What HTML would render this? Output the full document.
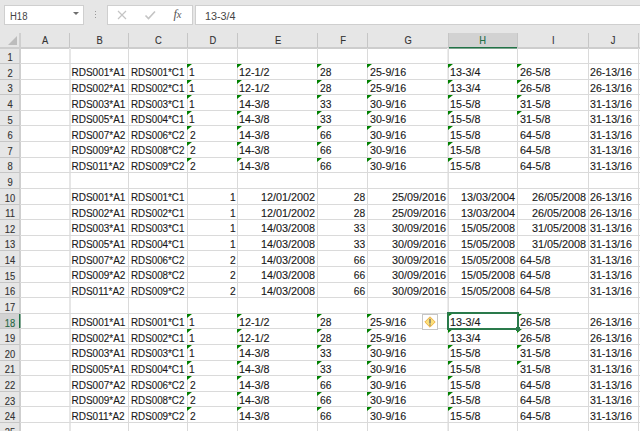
<!DOCTYPE html><html><head><meta charset="utf-8"><style>
*{margin:0;padding:0;box-sizing:border-box}
html,body{width:640px;height:431px;overflow:hidden;background:#e6e6e6;font-family:"Liberation Sans",sans-serif;}
.a{position:absolute}
.t{position:absolute;font-size:10.0px;line-height:14px;color:#1a1a1a;-webkit-text-stroke:0.12px #1a1a1a;white-space:nowrap}
.gv{position:absolute;width:1px;background:#dadada}
.gh{position:absolute;height:1px;background:#dadada}
.tri{position:absolute;width:0;height:0;border-top:4px solid #008000;border-right:5px solid transparent}
.hd{position:absolute;font-size:10.4px;line-height:14px;color:#333;-webkit-text-stroke:0.12px #333;text-align:center;white-space:nowrap;transform:scaleX(0.9)}

</style></head><body>
<div class="a" style="left:4px;top:5px;width:80px;height:20px;background:#fff;border:1px solid #cfcfcf"></div>
<div class="t" style="left:9.5px;top:9.6px;color:#444;-webkit-text-stroke:0;transform:scaleX(0.95);transform-origin:0 0">H18</div>
<div class="a" style="left:73px;top:12.3px;width:0;height:0;border-left:3px solid transparent;border-right:3px solid transparent;border-top:3px solid #6e6e6e"></div>
<div class="a" style="left:95px;top:11px;width:1px;height:1px;background:#999"></div>
<div class="a" style="left:95px;top:14px;width:1px;height:1px;background:#999"></div>
<div class="a" style="left:95px;top:17px;width:1px;height:1px;background:#999"></div>
<div class="a" style="left:107px;top:5px;width:86px;height:20px;background:#fff;border:1px solid #cfcfcf"></div>
<svg class="a" style="left:116px;top:9px" width="12" height="12" viewBox="0 0 12 12"><path d="M2 2L10 10M10 2L2 10" stroke="#c4c4c4" stroke-width="1.2" fill="none"/></svg>
<svg class="a" style="left:144px;top:8.5px" width="12" height="12" viewBox="0 0 12 12"><path d="M1.5 6.5L4.5 9.5L11 2.5" stroke="#c4c4c4" stroke-width="1.6" fill="none"/></svg>
<div class="a" style="left:173.5px;top:7px;font-family:'Liberation Serif',serif;font-style:italic;font-size:12.5px;line-height:14px;color:#555">f<span style="font-size:10.5px;margin-left:-0.3px">x</span></div>
<div class="a" style="left:195px;top:5px;width:460px;height:20px;background:#fff;border:1px solid #cfcfcf"></div>
<div class="t" style="left:205px;top:9.5px;color:#444;-webkit-text-stroke:0;transform:scaleX(1.08);transform-origin:0 0">13-3/4</div>
<div class="a" style="left:0;top:48px;width:640px;height:383px;background:#fff"></div>
<div class="a" style="left:0;top:33px;width:640px;height:15px;background:#e6e6e6"></div>
<div class="a" style="left:0;top:48px;width:20px;height:383px;background:#e6e6e6"></div>
<div class="a" style="left:448.5px;top:33px;width:69.0px;height:15px;background:#d2d2d2"></div>
<div class="a" style="left:0;top:313.8px;width:20px;height:15.1px;background:#d2d2d2"></div>
<div class="a" style="left:0;top:47px;width:640px;height:2px;background:#cdcdcd"></div>
<div class="a" style="left:448.0px;top:47px;width:69.5px;height:1px;background:#217346"></div>
<div class="a" style="left:448.0px;top:48px;width:69.5px;height:1px;background:rgba(33,115,70,0.45)"></div>
<div class="a" style="left:19px;top:33px;width:2px;height:398px;background:#cfcfcf"></div>
<div class="a" style="left:19px;top:313.3px;width:1px;height:15.6px;background:#217346"></div>
<div class="a" style="left:20px;top:313.3px;width:1px;height:15.6px;background:rgba(33,115,70,0.45)"></div>
<div class="a" style="left:8px;top:36px;width:0;height:0;border-bottom:9px solid #bcbcbc;border-left:9px solid transparent"></div>
<div class="a" style="left:69.0px;top:33px;width:1px;height:15px;background:#c6c6c6"></div>
<div class="hd" style="left:19.5px;top:34px;width:50.0px;color:#333">A</div>
<div class="a" style="left:128.0px;top:33px;width:1px;height:15px;background:#c6c6c6"></div>
<div class="hd" style="left:69.5px;top:34px;width:59.0px;color:#333">B</div>
<div class="a" style="left:187.0px;top:33px;width:1px;height:15px;background:#c6c6c6"></div>
<div class="hd" style="left:128.5px;top:34px;width:59.0px;color:#333">C</div>
<div class="a" style="left:237.0px;top:33px;width:1px;height:15px;background:#c6c6c6"></div>
<div class="hd" style="left:187.5px;top:34px;width:50.0px;color:#333">D</div>
<div class="a" style="left:317.0px;top:33px;width:1px;height:15px;background:#c6c6c6"></div>
<div class="hd" style="left:237.5px;top:34px;width:80.0px;color:#333">E</div>
<div class="a" style="left:367.0px;top:33px;width:1px;height:15px;background:#c6c6c6"></div>
<div class="hd" style="left:317.5px;top:34px;width:50.0px;color:#333">F</div>
<div class="a" style="left:447.5px;top:33px;width:1px;height:15px;background:#c6c6c6"></div>
<div class="hd" style="left:367.5px;top:34px;width:80.5px;color:#333">G</div>
<div class="a" style="left:517.0px;top:33px;width:1px;height:15px;background:#c6c6c6"></div>
<div class="hd" style="left:448.0px;top:34px;width:69.5px;color:#217346">H</div>
<div class="a" style="left:587.5px;top:33px;width:1px;height:15px;background:#c6c6c6"></div>
<div class="hd" style="left:517.5px;top:34px;width:70.5px;color:#333">I</div>
<div class="a" style="left:637.5px;top:33px;width:1px;height:15px;background:#c6c6c6"></div>
<div class="hd" style="left:588.0px;top:34px;width:50.0px;color:#333">J</div>
<div class="gv" style="left:69px;top:48px;width:2px;height:383px;background:#e6e6e6"></div>
<div class="gv" style="left:128.0px;top:48px;height:383px"></div>
<div class="gv" style="left:187.0px;top:48px;height:383px"></div>
<div class="gv" style="left:237.0px;top:48px;height:383px"></div>
<div class="gv" style="left:317.0px;top:48px;height:383px"></div>
<div class="gv" style="left:367.0px;top:48px;height:383px"></div>
<div class="gv" style="left:447px;top:48px;width:1px;height:383px;background:#ececec"></div>
<div class="gv" style="left:448px;top:48px;width:1px;height:383px;background:#dedede"></div>
<div class="gv" style="left:517.0px;top:48px;height:383px"></div>
<div class="gv" style="left:587.5px;top:48px;height:383px"></div>
<div class="gv" style="left:637.5px;top:48px;height:383px"></div>
<div class="gh" style="left:20px;top:63.0px;width:620px"></div>
<div class="a" style="left:0;top:63.0px;width:20px;height:1px;background:#c6c6c6"></div>
<div class="hd" style="left:0;top:51.1px;width:20px;color:#333">1</div>
<div class="gh" style="left:20px;top:78.6px;width:620px"></div>
<div class="a" style="left:0;top:78.6px;width:20px;height:1px;background:#c6c6c6"></div>
<div class="hd" style="left:0;top:66.7px;width:20px;color:#333">2</div>
<div class="gh" style="left:20px;top:94.2px;width:620px"></div>
<div class="a" style="left:0;top:94.2px;width:20px;height:1px;background:#c6c6c6"></div>
<div class="hd" style="left:0;top:82.3px;width:20px;color:#333">3</div>
<div class="gh" style="left:20px;top:109.8px;width:620px"></div>
<div class="a" style="left:0;top:109.8px;width:20px;height:1px;background:#c6c6c6"></div>
<div class="hd" style="left:0;top:97.9px;width:20px;color:#333">4</div>
<div class="gh" style="left:20px;top:125.4px;width:620px"></div>
<div class="a" style="left:0;top:125.4px;width:20px;height:1px;background:#c6c6c6"></div>
<div class="hd" style="left:0;top:113.5px;width:20px;color:#333">5</div>
<div class="gh" style="left:20px;top:141.1px;width:620px"></div>
<div class="a" style="left:0;top:141.1px;width:20px;height:1px;background:#c6c6c6"></div>
<div class="hd" style="left:0;top:129.2px;width:20px;color:#333">6</div>
<div class="gh" style="left:20px;top:156.7px;width:620px"></div>
<div class="a" style="left:0;top:156.7px;width:20px;height:1px;background:#c6c6c6"></div>
<div class="hd" style="left:0;top:144.8px;width:20px;color:#333">7</div>
<div class="gh" style="left:20px;top:172.3px;width:620px"></div>
<div class="a" style="left:0;top:172.3px;width:20px;height:1px;background:#c6c6c6"></div>
<div class="hd" style="left:0;top:160.4px;width:20px;color:#333">8</div>
<div class="gh" style="left:20px;top:187.9px;width:620px"></div>
<div class="a" style="left:0;top:187.9px;width:20px;height:1px;background:#c6c6c6"></div>
<div class="hd" style="left:0;top:176.0px;width:20px;color:#333">9</div>
<div class="gh" style="left:20px;top:203.5px;width:620px"></div>
<div class="a" style="left:0;top:203.5px;width:20px;height:1px;background:#c6c6c6"></div>
<div class="hd" style="left:0;top:191.6px;width:20px;color:#333">10</div>
<div class="gh" style="left:20px;top:219.1px;width:620px"></div>
<div class="a" style="left:0;top:219.1px;width:20px;height:1px;background:#c6c6c6"></div>
<div class="hd" style="left:0;top:207.2px;width:20px;color:#333">11</div>
<div class="gh" style="left:20px;top:234.7px;width:620px"></div>
<div class="a" style="left:0;top:234.7px;width:20px;height:1px;background:#c6c6c6"></div>
<div class="hd" style="left:0;top:222.8px;width:20px;color:#333">12</div>
<div class="gh" style="left:20px;top:250.3px;width:620px"></div>
<div class="a" style="left:0;top:250.3px;width:20px;height:1px;background:#c6c6c6"></div>
<div class="hd" style="left:0;top:238.4px;width:20px;color:#333">13</div>
<div class="gh" style="left:20px;top:265.9px;width:620px"></div>
<div class="a" style="left:0;top:265.9px;width:20px;height:1px;background:#c6c6c6"></div>
<div class="hd" style="left:0;top:254.0px;width:20px;color:#333">14</div>
<div class="gh" style="left:20px;top:281.5px;width:620px"></div>
<div class="a" style="left:0;top:281.5px;width:20px;height:1px;background:#c6c6c6"></div>
<div class="hd" style="left:0;top:269.6px;width:20px;color:#333">15</div>
<div class="gh" style="left:20px;top:297.1px;width:620px"></div>
<div class="a" style="left:0;top:297.1px;width:20px;height:1px;background:#c6c6c6"></div>
<div class="hd" style="left:0;top:285.2px;width:20px;color:#333">16</div>
<div class="gh" style="left:20px;top:312.8px;width:620px"></div>
<div class="a" style="left:0;top:312.8px;width:20px;height:1px;background:#c6c6c6"></div>
<div class="hd" style="left:0;top:300.9px;width:20px;color:#333">17</div>
<div class="gh" style="left:20px;top:328.4px;width:620px"></div>
<div class="a" style="left:0;top:328.4px;width:20px;height:1px;background:#c6c6c6"></div>
<div class="hd" style="left:0;top:316.5px;width:20px;color:#217346">18</div>
<div class="gh" style="left:20px;top:344.0px;width:620px"></div>
<div class="a" style="left:0;top:344.0px;width:20px;height:1px;background:#c6c6c6"></div>
<div class="hd" style="left:0;top:332.1px;width:20px;color:#333">19</div>
<div class="gh" style="left:20px;top:359.6px;width:620px"></div>
<div class="a" style="left:0;top:359.6px;width:20px;height:1px;background:#c6c6c6"></div>
<div class="hd" style="left:0;top:347.7px;width:20px;color:#333">20</div>
<div class="gh" style="left:20px;top:375.2px;width:620px"></div>
<div class="a" style="left:0;top:375.2px;width:20px;height:1px;background:#c6c6c6"></div>
<div class="hd" style="left:0;top:363.3px;width:20px;color:#333">21</div>
<div class="gh" style="left:20px;top:390.8px;width:620px"></div>
<div class="a" style="left:0;top:390.8px;width:20px;height:1px;background:#c6c6c6"></div>
<div class="hd" style="left:0;top:378.9px;width:20px;color:#333">22</div>
<div class="gh" style="left:20px;top:406.4px;width:620px"></div>
<div class="a" style="left:0;top:406.4px;width:20px;height:1px;background:#c6c6c6"></div>
<div class="hd" style="left:0;top:394.5px;width:20px;color:#333">23</div>
<div class="gh" style="left:20px;top:422.0px;width:620px"></div>
<div class="a" style="left:0;top:422.0px;width:20px;height:1px;background:#c6c6c6"></div>
<div class="hd" style="left:0;top:410.1px;width:20px;color:#333">24</div>
<div class="gh" style="left:20px;top:437.6px;width:620px"></div>
<div class="a" style="left:0;top:437.6px;width:20px;height:1px;background:#c6c6c6"></div>
<div class="hd" style="left:0;top:425.7px;width:20px;color:#333">25</div>
<div class="t" style="left:71.5px;top:66.3px;transform:scaleX(1.000);transform-origin:0 0">RDS001*A1</div>
<div class="t" style="left:130.5px;top:66.3px;transform:scaleX(0.980);transform-origin:0 0">RDS001*C1</div>
<div class="t" style="left:188.5px;top:66.3px;transform:scaleX(1.021);transform-origin:0 0">1</div>
<div class="tri" style="left:187.0px;top:64.0px"></div>
<div class="t" style="left:238.5px;top:66.3px;transform:scaleX(1.075);transform-origin:0 0">12-1/2</div>
<div class="tri" style="left:237.0px;top:64.0px"></div>
<div class="t" style="left:319.5px;top:66.3px;transform:scaleX(1.021);transform-origin:0 0">28</div>
<div class="tri" style="left:317.0px;top:64.0px"></div>
<div class="t" style="left:369.5px;top:66.3px;transform:scaleX(1.066);transform-origin:0 0">25-9/16</div>
<div class="tri" style="left:367.0px;top:64.0px"></div>
<div class="t" style="left:450.0px;top:66.3px;transform:scaleX(1.075);transform-origin:0 0">13-3/4</div>
<div class="tri" style="left:447.5px;top:64.0px"></div>
<div class="t" style="left:519.5px;top:66.3px;transform:scaleX(1.075);transform-origin:0 0">26-5/8</div>
<div class="tri" style="left:517.0px;top:64.0px"></div>
<div class="t" style="left:590.0px;top:66.3px;transform:scaleX(1.060);transform-origin:0 0">26-13/16</div>
<div class="t" style="left:71.5px;top:81.9px;transform:scaleX(1.000);transform-origin:0 0">RDS002*A1</div>
<div class="t" style="left:130.5px;top:81.9px;transform:scaleX(0.980);transform-origin:0 0">RDS002*C1</div>
<div class="t" style="left:188.5px;top:81.9px;transform:scaleX(1.021);transform-origin:0 0">1</div>
<div class="tri" style="left:187.0px;top:79.6px"></div>
<div class="t" style="left:238.5px;top:81.9px;transform:scaleX(1.075);transform-origin:0 0">12-1/2</div>
<div class="tri" style="left:237.0px;top:79.6px"></div>
<div class="t" style="left:319.5px;top:81.9px;transform:scaleX(1.021);transform-origin:0 0">28</div>
<div class="tri" style="left:317.0px;top:79.6px"></div>
<div class="t" style="left:369.5px;top:81.9px;transform:scaleX(1.066);transform-origin:0 0">25-9/16</div>
<div class="tri" style="left:367.0px;top:79.6px"></div>
<div class="t" style="left:450.0px;top:81.9px;transform:scaleX(1.075);transform-origin:0 0">13-3/4</div>
<div class="tri" style="left:447.5px;top:79.6px"></div>
<div class="t" style="left:519.5px;top:81.9px;transform:scaleX(1.075);transform-origin:0 0">26-5/8</div>
<div class="tri" style="left:517.0px;top:79.6px"></div>
<div class="t" style="left:590.0px;top:81.9px;transform:scaleX(1.060);transform-origin:0 0">26-13/16</div>
<div class="t" style="left:71.5px;top:97.5px;transform:scaleX(1.000);transform-origin:0 0">RDS003*A1</div>
<div class="t" style="left:130.5px;top:97.5px;transform:scaleX(0.980);transform-origin:0 0">RDS003*C1</div>
<div class="t" style="left:188.5px;top:97.5px;transform:scaleX(1.021);transform-origin:0 0">1</div>
<div class="tri" style="left:187.0px;top:95.2px"></div>
<div class="t" style="left:238.5px;top:97.5px;transform:scaleX(1.075);transform-origin:0 0">14-3/8</div>
<div class="tri" style="left:237.0px;top:95.2px"></div>
<div class="t" style="left:319.5px;top:97.5px;transform:scaleX(1.021);transform-origin:0 0">33</div>
<div class="tri" style="left:317.0px;top:95.2px"></div>
<div class="t" style="left:369.5px;top:97.5px;transform:scaleX(1.066);transform-origin:0 0">30-9/16</div>
<div class="tri" style="left:367.0px;top:95.2px"></div>
<div class="t" style="left:450.0px;top:97.5px;transform:scaleX(1.075);transform-origin:0 0">15-5/8</div>
<div class="tri" style="left:447.5px;top:95.2px"></div>
<div class="t" style="left:519.5px;top:97.5px;transform:scaleX(1.075);transform-origin:0 0">31-5/8</div>
<div class="tri" style="left:517.0px;top:95.2px"></div>
<div class="t" style="left:590.0px;top:97.5px;transform:scaleX(1.060);transform-origin:0 0">31-13/16</div>
<div class="t" style="left:71.5px;top:113.1px;transform:scaleX(1.000);transform-origin:0 0">RDS005*A1</div>
<div class="t" style="left:130.5px;top:113.1px;transform:scaleX(0.980);transform-origin:0 0">RDS004*C1</div>
<div class="t" style="left:188.5px;top:113.1px;transform:scaleX(1.021);transform-origin:0 0">1</div>
<div class="tri" style="left:187.0px;top:110.8px"></div>
<div class="t" style="left:238.5px;top:113.1px;transform:scaleX(1.075);transform-origin:0 0">14-3/8</div>
<div class="tri" style="left:237.0px;top:110.8px"></div>
<div class="t" style="left:319.5px;top:113.1px;transform:scaleX(1.021);transform-origin:0 0">33</div>
<div class="tri" style="left:317.0px;top:110.8px"></div>
<div class="t" style="left:369.5px;top:113.1px;transform:scaleX(1.066);transform-origin:0 0">30-9/16</div>
<div class="tri" style="left:367.0px;top:110.8px"></div>
<div class="t" style="left:450.0px;top:113.1px;transform:scaleX(1.075);transform-origin:0 0">15-5/8</div>
<div class="tri" style="left:447.5px;top:110.8px"></div>
<div class="t" style="left:519.5px;top:113.1px;transform:scaleX(1.075);transform-origin:0 0">31-5/8</div>
<div class="tri" style="left:517.0px;top:110.8px"></div>
<div class="t" style="left:590.0px;top:113.1px;transform:scaleX(1.060);transform-origin:0 0">31-13/16</div>
<div class="t" style="left:71.5px;top:128.8px;transform:scaleX(1.000);transform-origin:0 0">RDS007*A2</div>
<div class="t" style="left:130.5px;top:128.8px;transform:scaleX(0.980);transform-origin:0 0">RDS006*C2</div>
<div class="t" style="left:189.5px;top:128.8px;transform:scaleX(1.021);transform-origin:0 0">2</div>
<div class="tri" style="left:187.0px;top:126.4px"></div>
<div class="t" style="left:238.5px;top:128.8px;transform:scaleX(1.075);transform-origin:0 0">14-3/8</div>
<div class="tri" style="left:237.0px;top:126.4px"></div>
<div class="t" style="left:319.5px;top:128.8px;transform:scaleX(1.021);transform-origin:0 0">66</div>
<div class="tri" style="left:317.0px;top:126.4px"></div>
<div class="t" style="left:369.5px;top:128.8px;transform:scaleX(1.066);transform-origin:0 0">30-9/16</div>
<div class="tri" style="left:367.0px;top:126.4px"></div>
<div class="t" style="left:450.0px;top:128.8px;transform:scaleX(1.075);transform-origin:0 0">15-5/8</div>
<div class="tri" style="left:447.5px;top:126.4px"></div>
<div class="t" style="left:519.5px;top:128.8px;transform:scaleX(1.075);transform-origin:0 0">64-5/8</div>
<div class="t" style="left:590.0px;top:128.8px;transform:scaleX(1.060);transform-origin:0 0">31-13/16</div>
<div class="t" style="left:71.5px;top:144.4px;transform:scaleX(1.000);transform-origin:0 0">RDS009*A2</div>
<div class="t" style="left:130.5px;top:144.4px;transform:scaleX(0.980);transform-origin:0 0">RDS008*C2</div>
<div class="t" style="left:189.5px;top:144.4px;transform:scaleX(1.021);transform-origin:0 0">2</div>
<div class="tri" style="left:187.0px;top:142.1px"></div>
<div class="t" style="left:238.5px;top:144.4px;transform:scaleX(1.075);transform-origin:0 0">14-3/8</div>
<div class="tri" style="left:237.0px;top:142.1px"></div>
<div class="t" style="left:319.5px;top:144.4px;transform:scaleX(1.021);transform-origin:0 0">66</div>
<div class="tri" style="left:317.0px;top:142.1px"></div>
<div class="t" style="left:369.5px;top:144.4px;transform:scaleX(1.066);transform-origin:0 0">30-9/16</div>
<div class="tri" style="left:367.0px;top:142.1px"></div>
<div class="t" style="left:450.0px;top:144.4px;transform:scaleX(1.075);transform-origin:0 0">15-5/8</div>
<div class="tri" style="left:447.5px;top:142.1px"></div>
<div class="t" style="left:519.5px;top:144.4px;transform:scaleX(1.075);transform-origin:0 0">64-5/8</div>
<div class="t" style="left:590.0px;top:144.4px;transform:scaleX(1.060);transform-origin:0 0">31-13/16</div>
<div class="t" style="left:71.5px;top:160.0px;transform:scaleX(1.000);transform-origin:0 0">RDS011*A2</div>
<div class="t" style="left:130.5px;top:160.0px;transform:scaleX(0.980);transform-origin:0 0">RDS009*C2</div>
<div class="t" style="left:189.5px;top:160.0px;transform:scaleX(1.021);transform-origin:0 0">2</div>
<div class="tri" style="left:187.0px;top:157.7px"></div>
<div class="t" style="left:238.5px;top:160.0px;transform:scaleX(1.075);transform-origin:0 0">14-3/8</div>
<div class="tri" style="left:237.0px;top:157.7px"></div>
<div class="t" style="left:319.5px;top:160.0px;transform:scaleX(1.021);transform-origin:0 0">66</div>
<div class="tri" style="left:317.0px;top:157.7px"></div>
<div class="t" style="left:369.5px;top:160.0px;transform:scaleX(1.066);transform-origin:0 0">30-9/16</div>
<div class="tri" style="left:367.0px;top:157.7px"></div>
<div class="t" style="left:450.0px;top:160.0px;transform:scaleX(1.075);transform-origin:0 0">15-5/8</div>
<div class="tri" style="left:447.5px;top:157.7px"></div>
<div class="t" style="left:519.5px;top:160.0px;transform:scaleX(1.075);transform-origin:0 0">64-5/8</div>
<div class="t" style="left:590.0px;top:160.0px;transform:scaleX(1.060);transform-origin:0 0">31-13/16</div>
<div class="t" style="left:71.5px;top:191.2px;transform:scaleX(1.000);transform-origin:0 0">RDS001*A1</div>
<div class="t" style="left:130.5px;top:191.2px;transform:scaleX(0.980);transform-origin:0 0">RDS001*C1</div>
<div class="t" style="right:404.5px;top:191.2px;transform:scaleX(1.021);transform-origin:100% 0">1</div>
<div class="t" style="right:324.5px;top:191.2px;transform:scaleX(1.081);transform-origin:100% 0">12/01/2002</div>
<div class="t" style="right:274.5px;top:191.2px;transform:scaleX(1.021);transform-origin:100% 0">28</div>
<div class="t" style="right:194.0px;top:191.2px;transform:scaleX(1.081);transform-origin:100% 0">25/09/2016</div>
<div class="t" style="right:124.5px;top:191.2px;transform:scaleX(1.081);transform-origin:100% 0">13/03/2004</div>
<div class="t" style="right:54.0px;top:191.2px;transform:scaleX(1.081);transform-origin:100% 0">26/05/2008</div>
<div class="t" style="left:590.0px;top:191.2px;transform:scaleX(1.060);transform-origin:0 0">26-13/16</div>
<div class="t" style="left:71.5px;top:206.8px;transform:scaleX(1.000);transform-origin:0 0">RDS002*A1</div>
<div class="t" style="left:130.5px;top:206.8px;transform:scaleX(0.980);transform-origin:0 0">RDS002*C1</div>
<div class="t" style="right:404.5px;top:206.8px;transform:scaleX(1.021);transform-origin:100% 0">1</div>
<div class="t" style="right:324.5px;top:206.8px;transform:scaleX(1.081);transform-origin:100% 0">12/01/2002</div>
<div class="t" style="right:274.5px;top:206.8px;transform:scaleX(1.021);transform-origin:100% 0">28</div>
<div class="t" style="right:194.0px;top:206.8px;transform:scaleX(1.081);transform-origin:100% 0">25/09/2016</div>
<div class="t" style="right:124.5px;top:206.8px;transform:scaleX(1.081);transform-origin:100% 0">13/03/2004</div>
<div class="t" style="right:54.0px;top:206.8px;transform:scaleX(1.081);transform-origin:100% 0">26/05/2008</div>
<div class="t" style="left:590.0px;top:206.8px;transform:scaleX(1.060);transform-origin:0 0">26-13/16</div>
<div class="t" style="left:71.5px;top:222.4px;transform:scaleX(1.000);transform-origin:0 0">RDS003*A1</div>
<div class="t" style="left:130.5px;top:222.4px;transform:scaleX(0.980);transform-origin:0 0">RDS003*C1</div>
<div class="t" style="right:404.5px;top:222.4px;transform:scaleX(1.021);transform-origin:100% 0">1</div>
<div class="t" style="right:324.5px;top:222.4px;transform:scaleX(1.081);transform-origin:100% 0">14/03/2008</div>
<div class="t" style="right:274.5px;top:222.4px;transform:scaleX(1.021);transform-origin:100% 0">33</div>
<div class="t" style="right:194.0px;top:222.4px;transform:scaleX(1.081);transform-origin:100% 0">30/09/2016</div>
<div class="t" style="right:124.5px;top:222.4px;transform:scaleX(1.081);transform-origin:100% 0">15/05/2008</div>
<div class="t" style="right:54.0px;top:222.4px;transform:scaleX(1.081);transform-origin:100% 0">31/05/2008</div>
<div class="t" style="left:590.0px;top:222.4px;transform:scaleX(1.060);transform-origin:0 0">31-13/16</div>
<div class="t" style="left:71.5px;top:238.0px;transform:scaleX(1.000);transform-origin:0 0">RDS005*A1</div>
<div class="t" style="left:130.5px;top:238.0px;transform:scaleX(0.980);transform-origin:0 0">RDS004*C1</div>
<div class="t" style="right:404.5px;top:238.0px;transform:scaleX(1.021);transform-origin:100% 0">1</div>
<div class="t" style="right:324.5px;top:238.0px;transform:scaleX(1.081);transform-origin:100% 0">14/03/2008</div>
<div class="t" style="right:274.5px;top:238.0px;transform:scaleX(1.021);transform-origin:100% 0">33</div>
<div class="t" style="right:194.0px;top:238.0px;transform:scaleX(1.081);transform-origin:100% 0">30/09/2016</div>
<div class="t" style="right:124.5px;top:238.0px;transform:scaleX(1.081);transform-origin:100% 0">15/05/2008</div>
<div class="t" style="right:54.0px;top:238.0px;transform:scaleX(1.081);transform-origin:100% 0">31/05/2008</div>
<div class="t" style="left:590.0px;top:238.0px;transform:scaleX(1.060);transform-origin:0 0">31-13/16</div>
<div class="t" style="left:71.5px;top:253.6px;transform:scaleX(1.000);transform-origin:0 0">RDS007*A2</div>
<div class="t" style="left:130.5px;top:253.6px;transform:scaleX(0.980);transform-origin:0 0">RDS006*C2</div>
<div class="t" style="right:404.5px;top:253.6px;transform:scaleX(1.021);transform-origin:100% 0">2</div>
<div class="t" style="right:324.5px;top:253.6px;transform:scaleX(1.081);transform-origin:100% 0">14/03/2008</div>
<div class="t" style="right:274.5px;top:253.6px;transform:scaleX(1.021);transform-origin:100% 0">66</div>
<div class="t" style="right:194.0px;top:253.6px;transform:scaleX(1.081);transform-origin:100% 0">30/09/2016</div>
<div class="t" style="right:124.5px;top:253.6px;transform:scaleX(1.081);transform-origin:100% 0">15/05/2008</div>
<div class="t" style="left:519.5px;top:253.6px;transform:scaleX(1.075);transform-origin:0 0">64-5/8</div>
<div class="t" style="left:590.0px;top:253.6px;transform:scaleX(1.060);transform-origin:0 0">31-13/16</div>
<div class="t" style="left:71.5px;top:269.2px;transform:scaleX(1.000);transform-origin:0 0">RDS009*A2</div>
<div class="t" style="left:130.5px;top:269.2px;transform:scaleX(0.980);transform-origin:0 0">RDS008*C2</div>
<div class="t" style="right:404.5px;top:269.2px;transform:scaleX(1.021);transform-origin:100% 0">2</div>
<div class="t" style="right:324.5px;top:269.2px;transform:scaleX(1.081);transform-origin:100% 0">14/03/2008</div>
<div class="t" style="right:274.5px;top:269.2px;transform:scaleX(1.021);transform-origin:100% 0">66</div>
<div class="t" style="right:194.0px;top:269.2px;transform:scaleX(1.081);transform-origin:100% 0">30/09/2016</div>
<div class="t" style="right:124.5px;top:269.2px;transform:scaleX(1.081);transform-origin:100% 0">15/05/2008</div>
<div class="t" style="left:519.5px;top:269.2px;transform:scaleX(1.075);transform-origin:0 0">64-5/8</div>
<div class="t" style="left:590.0px;top:269.2px;transform:scaleX(1.060);transform-origin:0 0">31-13/16</div>
<div class="t" style="left:71.5px;top:284.8px;transform:scaleX(1.000);transform-origin:0 0">RDS011*A2</div>
<div class="t" style="left:130.5px;top:284.8px;transform:scaleX(0.980);transform-origin:0 0">RDS009*C2</div>
<div class="t" style="right:404.5px;top:284.8px;transform:scaleX(1.021);transform-origin:100% 0">2</div>
<div class="t" style="right:324.5px;top:284.8px;transform:scaleX(1.081);transform-origin:100% 0">14/03/2008</div>
<div class="t" style="right:274.5px;top:284.8px;transform:scaleX(1.021);transform-origin:100% 0">66</div>
<div class="t" style="right:194.0px;top:284.8px;transform:scaleX(1.081);transform-origin:100% 0">30/09/2016</div>
<div class="t" style="right:124.5px;top:284.8px;transform:scaleX(1.081);transform-origin:100% 0">15/05/2008</div>
<div class="t" style="left:519.5px;top:284.8px;transform:scaleX(1.075);transform-origin:0 0">64-5/8</div>
<div class="t" style="left:590.0px;top:284.8px;transform:scaleX(1.060);transform-origin:0 0">31-13/16</div>
<div class="t" style="left:71.5px;top:316.1px;transform:scaleX(1.000);transform-origin:0 0">RDS001*A1</div>
<div class="t" style="left:130.5px;top:316.1px;transform:scaleX(0.980);transform-origin:0 0">RDS001*C1</div>
<div class="t" style="left:188.5px;top:316.1px;transform:scaleX(1.021);transform-origin:0 0">1</div>
<div class="tri" style="left:187.0px;top:313.8px"></div>
<div class="t" style="left:238.5px;top:316.1px;transform:scaleX(1.075);transform-origin:0 0">12-1/2</div>
<div class="tri" style="left:237.0px;top:313.8px"></div>
<div class="t" style="left:319.5px;top:316.1px;transform:scaleX(1.021);transform-origin:0 0">28</div>
<div class="tri" style="left:317.0px;top:313.8px"></div>
<div class="t" style="left:369.5px;top:316.1px;transform:scaleX(1.066);transform-origin:0 0">25-9/16</div>
<div class="tri" style="left:367.0px;top:313.8px"></div>
<div class="t" style="left:450.0px;top:316.1px;transform:scaleX(1.075);transform-origin:0 0">13-3/4</div>
<div class="t" style="left:519.5px;top:316.1px;transform:scaleX(1.075);transform-origin:0 0">26-5/8</div>
<div class="tri" style="left:517.0px;top:313.8px"></div>
<div class="t" style="left:590.0px;top:316.1px;transform:scaleX(1.060);transform-origin:0 0">26-13/16</div>
<div class="t" style="left:71.5px;top:331.7px;transform:scaleX(1.000);transform-origin:0 0">RDS002*A1</div>
<div class="t" style="left:130.5px;top:331.7px;transform:scaleX(0.980);transform-origin:0 0">RDS002*C1</div>
<div class="t" style="left:188.5px;top:331.7px;transform:scaleX(1.021);transform-origin:0 0">1</div>
<div class="tri" style="left:187.0px;top:329.4px"></div>
<div class="t" style="left:238.5px;top:331.7px;transform:scaleX(1.075);transform-origin:0 0">12-1/2</div>
<div class="tri" style="left:237.0px;top:329.4px"></div>
<div class="t" style="left:319.5px;top:331.7px;transform:scaleX(1.021);transform-origin:0 0">28</div>
<div class="tri" style="left:317.0px;top:329.4px"></div>
<div class="t" style="left:369.5px;top:331.7px;transform:scaleX(1.066);transform-origin:0 0">25-9/16</div>
<div class="tri" style="left:367.0px;top:329.4px"></div>
<div class="t" style="left:450.0px;top:331.7px;transform:scaleX(1.075);transform-origin:0 0">13-3/4</div>
<div class="tri" style="left:447.5px;top:329.4px"></div>
<div class="t" style="left:519.5px;top:331.7px;transform:scaleX(1.075);transform-origin:0 0">26-5/8</div>
<div class="tri" style="left:517.0px;top:329.4px"></div>
<div class="t" style="left:590.0px;top:331.7px;transform:scaleX(1.060);transform-origin:0 0">26-13/16</div>
<div class="t" style="left:71.5px;top:347.3px;transform:scaleX(1.000);transform-origin:0 0">RDS003*A1</div>
<div class="t" style="left:130.5px;top:347.3px;transform:scaleX(0.980);transform-origin:0 0">RDS003*C1</div>
<div class="t" style="left:188.5px;top:347.3px;transform:scaleX(1.021);transform-origin:0 0">1</div>
<div class="tri" style="left:187.0px;top:345.0px"></div>
<div class="t" style="left:238.5px;top:347.3px;transform:scaleX(1.075);transform-origin:0 0">14-3/8</div>
<div class="tri" style="left:237.0px;top:345.0px"></div>
<div class="t" style="left:319.5px;top:347.3px;transform:scaleX(1.021);transform-origin:0 0">33</div>
<div class="tri" style="left:317.0px;top:345.0px"></div>
<div class="t" style="left:369.5px;top:347.3px;transform:scaleX(1.066);transform-origin:0 0">30-9/16</div>
<div class="tri" style="left:367.0px;top:345.0px"></div>
<div class="t" style="left:450.0px;top:347.3px;transform:scaleX(1.075);transform-origin:0 0">15-5/8</div>
<div class="tri" style="left:447.5px;top:345.0px"></div>
<div class="t" style="left:519.5px;top:347.3px;transform:scaleX(1.075);transform-origin:0 0">31-5/8</div>
<div class="tri" style="left:517.0px;top:345.0px"></div>
<div class="t" style="left:590.0px;top:347.3px;transform:scaleX(1.060);transform-origin:0 0">31-13/16</div>
<div class="t" style="left:71.5px;top:362.9px;transform:scaleX(1.000);transform-origin:0 0">RDS005*A1</div>
<div class="t" style="left:130.5px;top:362.9px;transform:scaleX(0.980);transform-origin:0 0">RDS004*C1</div>
<div class="t" style="left:188.5px;top:362.9px;transform:scaleX(1.021);transform-origin:0 0">1</div>
<div class="tri" style="left:187.0px;top:360.6px"></div>
<div class="t" style="left:238.5px;top:362.9px;transform:scaleX(1.075);transform-origin:0 0">14-3/8</div>
<div class="tri" style="left:237.0px;top:360.6px"></div>
<div class="t" style="left:319.5px;top:362.9px;transform:scaleX(1.021);transform-origin:0 0">33</div>
<div class="tri" style="left:317.0px;top:360.6px"></div>
<div class="t" style="left:369.5px;top:362.9px;transform:scaleX(1.066);transform-origin:0 0">30-9/16</div>
<div class="tri" style="left:367.0px;top:360.6px"></div>
<div class="t" style="left:450.0px;top:362.9px;transform:scaleX(1.075);transform-origin:0 0">15-5/8</div>
<div class="tri" style="left:447.5px;top:360.6px"></div>
<div class="t" style="left:519.5px;top:362.9px;transform:scaleX(1.075);transform-origin:0 0">31-5/8</div>
<div class="tri" style="left:517.0px;top:360.6px"></div>
<div class="t" style="left:590.0px;top:362.9px;transform:scaleX(1.060);transform-origin:0 0">31-13/16</div>
<div class="t" style="left:71.5px;top:378.5px;transform:scaleX(1.000);transform-origin:0 0">RDS007*A2</div>
<div class="t" style="left:130.5px;top:378.5px;transform:scaleX(0.980);transform-origin:0 0">RDS006*C2</div>
<div class="t" style="left:189.5px;top:378.5px;transform:scaleX(1.021);transform-origin:0 0">2</div>
<div class="tri" style="left:187.0px;top:376.2px"></div>
<div class="t" style="left:238.5px;top:378.5px;transform:scaleX(1.075);transform-origin:0 0">14-3/8</div>
<div class="tri" style="left:237.0px;top:376.2px"></div>
<div class="t" style="left:319.5px;top:378.5px;transform:scaleX(1.021);transform-origin:0 0">66</div>
<div class="tri" style="left:317.0px;top:376.2px"></div>
<div class="t" style="left:369.5px;top:378.5px;transform:scaleX(1.066);transform-origin:0 0">30-9/16</div>
<div class="tri" style="left:367.0px;top:376.2px"></div>
<div class="t" style="left:450.0px;top:378.5px;transform:scaleX(1.075);transform-origin:0 0">15-5/8</div>
<div class="tri" style="left:447.5px;top:376.2px"></div>
<div class="t" style="left:519.5px;top:378.5px;transform:scaleX(1.075);transform-origin:0 0">64-5/8</div>
<div class="t" style="left:590.0px;top:378.5px;transform:scaleX(1.060);transform-origin:0 0">31-13/16</div>
<div class="t" style="left:71.5px;top:394.1px;transform:scaleX(1.000);transform-origin:0 0">RDS009*A2</div>
<div class="t" style="left:130.5px;top:394.1px;transform:scaleX(0.980);transform-origin:0 0">RDS008*C2</div>
<div class="t" style="left:189.5px;top:394.1px;transform:scaleX(1.021);transform-origin:0 0">2</div>
<div class="tri" style="left:187.0px;top:391.8px"></div>
<div class="t" style="left:238.5px;top:394.1px;transform:scaleX(1.075);transform-origin:0 0">14-3/8</div>
<div class="tri" style="left:237.0px;top:391.8px"></div>
<div class="t" style="left:319.5px;top:394.1px;transform:scaleX(1.021);transform-origin:0 0">66</div>
<div class="tri" style="left:317.0px;top:391.8px"></div>
<div class="t" style="left:369.5px;top:394.1px;transform:scaleX(1.066);transform-origin:0 0">30-9/16</div>
<div class="tri" style="left:367.0px;top:391.8px"></div>
<div class="t" style="left:450.0px;top:394.1px;transform:scaleX(1.075);transform-origin:0 0">15-5/8</div>
<div class="tri" style="left:447.5px;top:391.8px"></div>
<div class="t" style="left:519.5px;top:394.1px;transform:scaleX(1.075);transform-origin:0 0">64-5/8</div>
<div class="t" style="left:590.0px;top:394.1px;transform:scaleX(1.060);transform-origin:0 0">31-13/16</div>
<div class="t" style="left:71.5px;top:409.7px;transform:scaleX(1.000);transform-origin:0 0">RDS011*A2</div>
<div class="t" style="left:130.5px;top:409.7px;transform:scaleX(0.980);transform-origin:0 0">RDS009*C2</div>
<div class="t" style="left:189.5px;top:409.7px;transform:scaleX(1.021);transform-origin:0 0">2</div>
<div class="tri" style="left:187.0px;top:407.4px"></div>
<div class="t" style="left:238.5px;top:409.7px;transform:scaleX(1.075);transform-origin:0 0">14-3/8</div>
<div class="tri" style="left:237.0px;top:407.4px"></div>
<div class="t" style="left:319.5px;top:409.7px;transform:scaleX(1.021);transform-origin:0 0">66</div>
<div class="tri" style="left:317.0px;top:407.4px"></div>
<div class="t" style="left:369.5px;top:409.7px;transform:scaleX(1.066);transform-origin:0 0">30-9/16</div>
<div class="tri" style="left:367.0px;top:407.4px"></div>
<div class="t" style="left:450.0px;top:409.7px;transform:scaleX(1.075);transform-origin:0 0">15-5/8</div>
<div class="tri" style="left:447.5px;top:407.4px"></div>
<div class="t" style="left:519.5px;top:409.7px;transform:scaleX(1.075);transform-origin:0 0">64-5/8</div>
<div class="t" style="left:590.0px;top:409.7px;transform:scaleX(1.060);transform-origin:0 0">31-13/16</div>
<div class="a" style="left:449px;top:314px;width:0;height:0;border-top:2.5px solid #008000;border-right:3px solid transparent"></div>
<div class="a" style="left:447px;top:312px;width:72px;height:18px;border:2px solid #2a7a4b"></div>
<div class="a" style="left:516px;top:326.5px;width:4px;height:4px;background:#2a7a4b"></div>
<div class="a" style="left:422px;top:314px;width:16px;height:16px;background:#fff;border:1px solid #c6c6c6"></div>
<svg class="a" style="left:424px;top:315.5px" width="12" height="12" viewBox="0 0 12 12"><path d="M6 0.8L11.2 6L6 11.2L0.8 6Z" fill="#fbe07a" stroke="#eeaa3a" stroke-width="0.9"/><path d="M6 2.8V7.6" stroke="#6a6a6a" stroke-width="1.3"/><rect x="5.35" y="8.4" width="1.3" height="1.3" fill="#6a6a6a"/></svg>
</body></html>
